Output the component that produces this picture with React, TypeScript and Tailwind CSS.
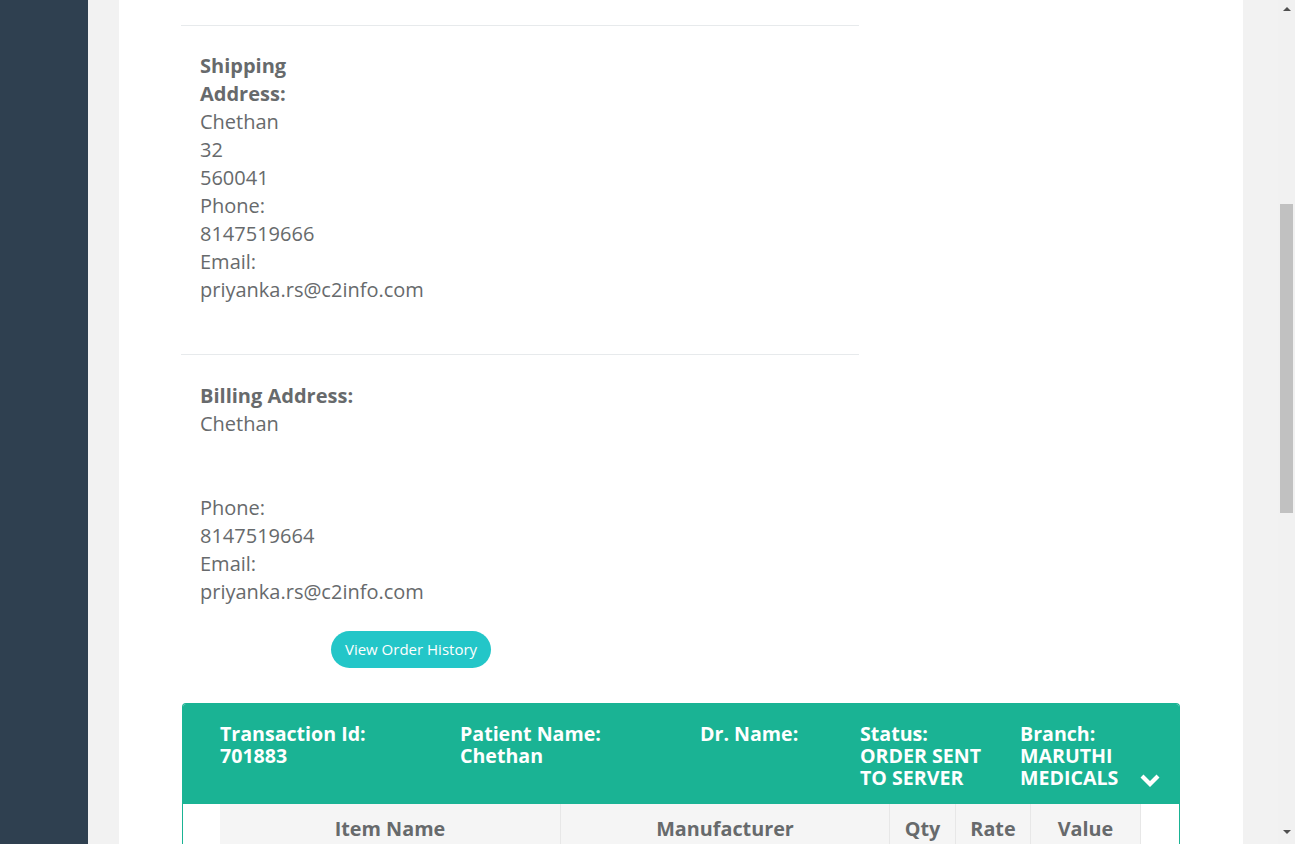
const font = { fontFamily: '"Open Sans", "Liberation Sans", sans-serif' }

function AddressBlock({
  title,
  lines,
}: {
  title: string
  lines: string[]
}) {
  return (
    <div className="w-[185px] pl-[19px] text-[20px] leading-[28px] text-[#676a6c]">
      <div className="font-bold">{title}</div>
      {lines.map((line, i) => (
        <div key={i} className="h-[28px] whitespace-nowrap">
          {line}
        </div>
      ))}
    </div>
  )
}

const headerCols = [
  { label: 'Transaction Id:', value: ['701883'], w: 'w-[240px]' },
  { label: 'Patient Name:', value: ['Chethan'], w: 'w-[240px]' },
  { label: 'Dr. Name:', value: [], w: 'w-[160px]' },
  { label: 'Status:', value: ['ORDER SENT', 'TO SERVER'], w: 'w-[160px]' },
  { label: 'Branch:', value: ['MARUTHI', 'MEDICALS'], w: 'w-[120px]' },
]

const tableCols = [
  { label: 'Item Name', w: 'w-[341px]' },
  { label: 'Manufacturer', w: 'w-[329px]' },
  { label: 'Qty', w: 'w-[66px]' },
  { label: 'Rate', w: 'w-[75px]' },
  { label: 'Value', w: 'w-[110px]' },
]

export default function App() {
  return (
    <div className="flex h-[844px] w-[1295px] overflow-hidden bg-[#f2f2f2]" style={font}>
      {/* Sidebar */}
      <div className="w-[88px] shrink-0 bg-[#2f4050]" />

      {/* Page */}
      <div className="flex w-[1190px] shrink-0 pl-[31px]">
        <div className="w-[1124px] bg-white pl-[62px]">
          {/* Shipping */}
          <div className="mt-[25px] w-[678px] border-t border-[#e7eaec] pt-[26px] pb-[50px]">
            <AddressBlock
              title="Shipping Address:"
              lines={['Chethan', '32', '560041', 'Phone:', '8147519666', 'Email:', 'priyanka.rs@c2info.com']}
            />
          </div>

          {/* Billing */}
          <div className="w-[678px] border-t border-[#e7eaec] pt-[27px]">
            <div className="w-[185px] pl-[19px] text-[20px] leading-[28px] text-[#676a6c]">
              <div className="whitespace-nowrap font-bold">Billing Address:</div>
              {['Chethan', '', '', 'Phone:', '8147519664', 'Email:', 'priyanka.rs@c2info.com'].map((line, i) => (
                <div key={i} className="h-[28px] whitespace-nowrap">
                  {line}
                </div>
              ))}
            </div>
          </div>

          <div className="mt-[25px] pl-[150px]">
            <button className="h-[37px] w-[160px] rounded-full bg-[#23c6c8] text-[15px] text-white">
              View Order History
            </button>
          </div>

          {/* Order panel */}
          <div className="mt-[35px] ml-[1px] w-[998px] overflow-hidden rounded-t-[4px] border border-b-0 border-[#1ab394]">
            <div className="relative flex h-[100px] bg-[#1ab394] pt-[19px] pl-[37px] text-[19.6px] font-bold leading-[22px] text-white">
              {headerCols.map((c) => (
                <div key={c.label} className={c.w}>
                  <div>{c.label}</div>
                  {c.value.map((v) => (
                    <div key={v}>{v}</div>
                  ))}
                </div>
              ))}
              <svg
                className="absolute left-[957px] top-[69px]"
                width="20"
                height="16"
                viewBox="0 0 20 16"
              >
                <path d="M0.5 4.5 L3.5 1.5 L10 8 L16.5 1.5 L19.5 4.5 L10 14 Z" fill="white" />
              </svg>
            </div>
            <div className="flex pl-[37px]">
              <div className="flex bg-[#f5f5f5] text-[19.8px] font-bold text-[#676a6c]">
                {tableCols.map((c) => (
                  <div
                    key={c.label}
                    className={`${c.w} h-[44px] border-r border-[#e7e7e7] pt-[12px] text-center leading-[26px]`}
                  >
                    {c.label}
                  </div>
                ))}
              </div>
            </div>
          </div>
        </div>
      </div>

      {/* Scrollbar */}
      <div className="relative w-[17px] shrink-0 bg-[#f1f1f1]">
        <div className="absolute left-[5px] top-[7px] h-0 w-0 border-x-[4px] border-b-[4px] border-x-transparent border-b-[#505050]" />
        <div className="absolute left-[2px] top-[204px] h-[309px] w-[13px] bg-[#c1c1c1]" />
        <div className="absolute left-[5px] top-[830px] h-0 w-0 border-x-[4px] border-t-[4px] border-x-transparent border-t-[#505050]" />
      </div>
    </div>
  )
}
